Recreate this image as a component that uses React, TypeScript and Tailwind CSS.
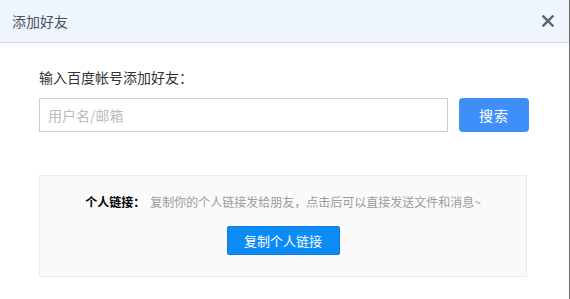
const cjk = { fontFamily: '"Microsoft YaHei", "Noto Sans CJK SC", "Noto Sans", sans-serif' };

function CloseIcon() {
  return (
    <svg width="12" height="12" viewBox="0 0 12 12" className="block">
      <path d="M1.5 1.5 L10.5 10.5 M10.5 1.5 L1.5 10.5" stroke="#5a6275" strokeWidth="2.4" strokeLinecap="square" />
    </svg>
  );
}

export default function App() {
  return (
    <div className="w-[570px] h-[299px] bg-white border-r border-[#6f6f6f] flex flex-col" style={cjk}>
      {/* header */}
      <div className="h-[43px] shrink-0 bg-[#eff5fd] border-b border-[#c3dbf6] flex items-center justify-between pl-[12px] pr-[14px]">
        <span className="text-[14px] leading-[20px] text-[#4a5263]">添加好友</span>
        <button className="flex items-center justify-center w-[14px] h-[14px]">
          <CloseIcon />
        </button>
      </div>

      {/* body */}
      <div className="flex flex-col pl-[39px] pr-[40px]">
        <p className="mt-[24px] text-[14px] leading-[20px] text-[#333]">输入百度帐号添加好友：</p>
        <div className="mt-[11px] flex items-center gap-[11px]">
          <div className="w-[409px] h-[34px] border border-[#cccccc] flex items-center px-[8px]">
            <span className="text-[14px] leading-[20px] text-[#bbbbbb]">用户名/邮箱</span>
          </div>
          <button className="w-[70px] h-[34px] rounded-[4px] bg-[#3f8ffb] text-white text-[14px] leading-[20px] tracking-[1px]">
            搜索
          </button>
        </div>

        <div className="mt-[43px] w-[488px] h-[102px] bg-[#fafafa] border border-[#ececec] flex flex-col items-center pt-[18px]">
          <p className="text-[12px] leading-[16px] whitespace-nowrap">
            <span className="font-bold text-black">个人链接：</span>
            <span className="ml-[5px] text-[#9a9a9a]">复制你的个人链接发给朋友，点击后可以直接发送文件和消息~</span>
          </p>
          <button className="mt-[16px] w-[113px] h-[29px] rounded-[2px] bg-[#0a8bf5] border border-[#1a78d6] text-white text-[13px] leading-[18px]">
            复制个人链接
          </button>
        </div>
      </div>
    </div>
  );
}
